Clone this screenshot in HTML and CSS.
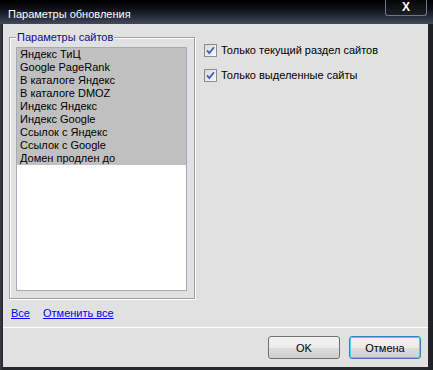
FILE: index.html
```html
<!DOCTYPE html>
<html lang="ru">
<head>
<meta charset="utf-8">
<title>Параметры обновления</title>
<link rel="stylesheet" href="styles.css">
</head>
<body>
<div class="window">
  <div class="titlebar">
    <span class="title">Параметры обновления</span>
    <span class="close">X</span>
  </div>
  <div class="client">
    <div class="main">
      <div class="group">
        <span class="group-label">Параметры сайтов</span>
        <ul class="list">
          <li>Яндекс ТиЦ</li>
          <li>Google PageRank</li>
          <li>В каталоге Яндекс</li>
          <li>В каталоге DMOZ</li>
          <li>Индекс Яндекс</li>
          <li>Индекс Google</li>
          <li>Ссылок с Яндекс</li>
          <li>Ссылок с Google</li>
          <li>Домен продлен до</li>
        </ul>
      </div>
      <div class="options">
        <label class="opt">
          <span class="cb"><svg width="13" height="13" viewBox="0 0 13 13"><defs><linearGradient id="g1" x1="0" y1="0" x2="1" y2="1"><stop offset="0" stop-color="#d8d8d4"/><stop offset="1" stop-color="#fbfbfb"/></linearGradient></defs><rect x="0.5" y="0.5" width="12" height="12" fill="url(#g1)" stroke="#8c8c8c"/><path d="M3 6.3 L5.3 9 L10 3.3" fill="none" stroke="#3a5fc8" stroke-width="1.8"/></svg></span>
          <span>Только текущий раздел сайтов</span>
        </label>
        <label class="opt">
          <span class="cb"><svg width="13" height="13" viewBox="0 0 13 13"><defs><linearGradient id="g2" x1="0" y1="0" x2="1" y2="1"><stop offset="0" stop-color="#d8d8d4"/><stop offset="1" stop-color="#fbfbfb"/></linearGradient></defs><rect x="0.5" y="0.5" width="12" height="12" fill="url(#g2)" stroke="#8c8c8c"/><path d="M3 6.3 L5.3 9 L10 3.3" fill="none" stroke="#3a5fc8" stroke-width="1.8"/></svg></span>
          <span>Только выделенные сайты</span>
        </label>
      </div>
    </div>
    <div class="links">
      <a href="#">Все</a>
      <a href="#">Отменить все</a>
    </div>
    <div class="sep"></div>
    <div class="buttons">
      <button class="btn">OK</button>
      <button class="btn btn-default">Отмена</button>
    </div>
  </div>
</div>
</body>
</html>
```

FILE: styles.css
```css
html, body {
  margin: 0;
  padding: 0;
  background: #000;
}
body {
  font-family: "Liberation Sans", Arial, sans-serif;
  font-size: 11px;
  line-height: 13px;
  color: #000;
}
.window {
  width: 433px;
  height: 370px;
  display: flex;
  flex-direction: column;
  background: linear-gradient(90deg, #3a3d44 0, #25272c 3px, #25272c 428px, #1c1d21 433px);
}
.titlebar {
  height: 24px;
  flex: none;
  display: flex;
  align-items: flex-start;
  background: linear-gradient(180deg, #000 0%, #0d0f15 35%, #2f3446 80%, #444a5e 100%);
}
.title {
  color: #fff;
  padding: 8px 0 0 8px;
}
.close {
  margin-left: auto;
  margin-right: 6px;
  width: 40px;
  height: 15px;
  background: linear-gradient(180deg, #050505, #1e1f24);
  border: 1px solid #70768a;
  border-top: none;
  border-radius: 0 0 3px 3px;
  color: #fff;
  font-weight: bold;
  font-size: 12px;
  line-height: 14px;
  text-align: center;
}
.client {
  flex: 1;
  margin: 0 5px 3px 3px;
  background: #e1e1e1;
  display: flex;
  flex-direction: column;
  padding-top: 13px;
}
.main {
  display: flex;
  padding-left: 6px;
}
.group {
  position: relative;
  width: 171px;
  height: 244px;
  border: 1px solid #a0a0a0;
  box-shadow: inset 1px 1px 0 #fff, 1px 1px 0 #fff;
  padding: 9px 7px 7px 6px;
  box-sizing: content-box;
  flex: none;
}
.group-label {
  position: absolute;
  top: -7px;
  left: 6px;
  padding: 0 1px;
  background: #e1e1e1;
  color: #0a0a9a;
}
.list {
  list-style: none;
  margin: 0;
  padding: 0;
  width: 169px;
  height: 242px;
  border: 1px solid #a3abb6;
  background: #fff;
}
.list li {
  background: #c0c0c0;
  padding-left: 3px;
  height: 13px;
  white-space: nowrap;
}
.options {
  display: flex;
  flex-direction: column;
  gap: 12px;
  margin-left: 9px;
  padding-top: 7px;
}
.opt {
  display: flex;
  align-items: center;
  gap: 4px;
  height: 13px;
}
.cb {
  width: 13px;
  height: 13px;
  display: block;
}
.cb svg {
  display: block;
}
.links {
  display: flex;
  gap: 13px;
  padding-left: 8px;
  margin-top: 8px;
}
.links a {
  color: #0000ff;
  text-decoration: underline;
}
.sep {
  height: 1px;
  background: #fff;
  margin-top: 7px;
}
.buttons {
  display: flex;
  justify-content: flex-end;
  gap: 9px;
  margin-top: 8px;
  padding-right: 7px;
}
.btn {
  width: 72px;
  height: 23px;
  font-family: "Liberation Sans", Arial, sans-serif;
  font-size: 11px;
  color: #000;
  border: 1px solid #707070;
  border-radius: 3px;
  background: linear-gradient(180deg, #f2f2f2 0%, #ebebeb 50%, #dddddd 51%, #cfcfcf 100%);
  padding: 0;
}
.btn-default {
  border-color: #3c7fb1;
  box-shadow: inset 0 0 0 1px #48d0f5;
}
```
